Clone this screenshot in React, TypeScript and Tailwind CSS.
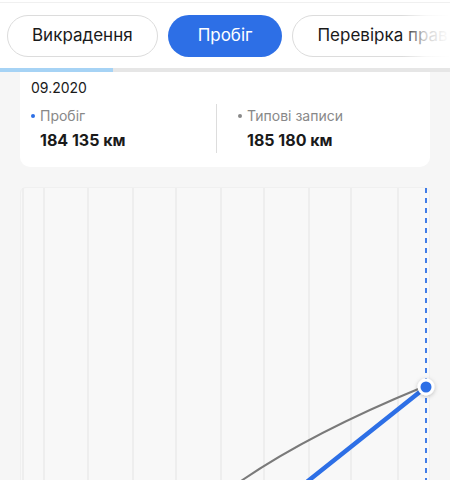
const tabs = [
  { label: "Викрадення", active: false },
  { label: "Пробіг", active: true },
  { label: "Перевірка прав", active: false },
];

const gridX = [2, 23, 67, 112, 155, 200, 243, 288, 330, 377];

const Chart = () => (
  <svg width="410" height="293" viewBox="0 0 410 293" className="block overflow-visible">
    {gridX.map((x) => (
      <line key={x} x1={x} y1="0" x2={x} y2="293" stroke="#eeeeee" strokeWidth="2" />
    ))}
    <line x1="405" y1="0" x2="405" y2="293" stroke="#2d6fe6" strokeWidth="1.8" strokeDasharray="5 5" />
    <path d="M220 293 Q 290 245, 402 199" fill="none" stroke="#7a7a7a" strokeWidth="2" />
    <path d="M287 293 L 400 203" fill="none" stroke="#2d6fe6" strokeWidth="4.5" strokeLinecap="round" />
    <defs>
      <filter id="sh" x="-50%" y="-50%" width="200%" height="200%">
        <feDropShadow dx="0" dy="1" stdDeviation="2" floodColor="#000" floodOpacity="0.25" />
      </filter>
    </defs>
    <circle cx="405" cy="199" r="8.5" fill="#ffffff" filter="url(#sh)" />
    <circle cx="405" cy="199" r="5.5" fill="#2d6fe6" />
  </svg>
);

export default function App() {
  return (
    <div className="w-[450px] h-[480px] overflow-hidden bg-[#f6f6f6] font-['Inter',sans-serif] text-[#1a1a1a]">
      <div className="bg-white">
        <div className="h-[3px] border-b border-[#f0f0f0]" />
        <div className="relative flex gap-[10px] pl-[7px] pt-[12px] pb-[11px] overflow-hidden whitespace-nowrap">
          {tabs.map((t) => (
            <div
              key={t.label}
              className={
                t.active
                  ? "h-[42px] px-[30px] flex items-center rounded-full bg-[#2d6fe6] text-white text-[17px] shrink-0"
                  : "h-[42px] px-[24px] flex items-center rounded-full border border-[#dcdcdc] bg-white text-[17px] shrink-0"
              }
            >
              {t.label}
            </div>
          ))}
          <div className="absolute right-0 top-0 h-full w-[48px] bg-gradient-to-r from-white/0 via-white/80 to-white" />
        </div>
        <div className="h-[4px] bg-[#e6e6e6]">
          <div className="h-full w-[113px] bg-[#a6d3f5]" />
        </div>
      </div>

      <div className="px-[20px]">
        <div className="bg-white rounded-b-[10px] px-[11px] pt-[6px] pb-[14px]">
          <div className="text-[14px] leading-[20px]">09.2020</div>
          <div className="flex mt-[6px]">
            <div className="w-[186px] border-r border-[#dddddd] py-[2px]">
              <div className="flex items-center gap-[5px] text-[14px] text-[#888888] leading-[20px]">
                <span className="w-[4px] h-[4px] rounded-full bg-[#2d6fe6]" />
                Пробіг
              </div>
              <div className="pl-[9px] mt-[3px] text-[16px] font-bold leading-[22px]">184 135 км</div>
            </div>
            <div className="pl-[21px] py-[2px]">
              <div className="flex items-center gap-[5px] text-[14px] text-[#888888] leading-[20px]">
                <span className="w-[4px] h-[4px] rounded-full bg-[#888888]" />
                Типові записи
              </div>
              <div className="pl-[9px] mt-[3px] text-[16px] font-bold leading-[22px]">185 180 км</div>
            </div>
          </div>
        </div>

        <div className="mt-[20px] bg-[#f8f8f8] border border-[#f0f0f0] rounded-t-[6px]">
          <Chart />
        </div>
      </div>
    </div>
  );
}
